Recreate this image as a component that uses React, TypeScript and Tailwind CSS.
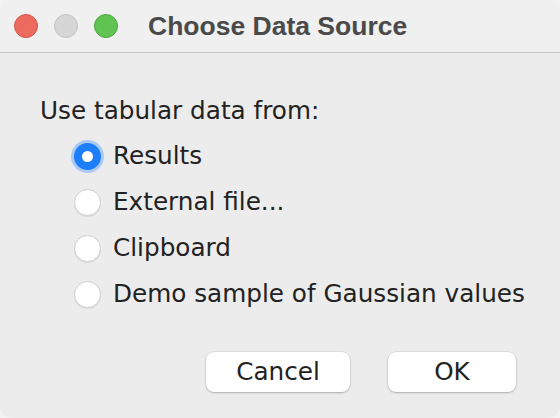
import { useState } from "react";

const options = [
  "Results",
  "External file...",
  "Clipboard",
  "Demo sample of Gaussian values",
];

function Radio(props: { checked: boolean }) {
  if (props.checked) {
    return (
      <div className="w-[27px] h-[27px] rounded-full bg-[#1c7ef9] flex items-center justify-center shadow-[0_0_0_3px_rgba(90,160,255,0.45)]">
        <div className="w-[11px] h-[11px] rounded-full bg-white" />
      </div>
    );
  }
  return (
    <div className="w-[27px] h-[27px] rounded-full bg-white border border-[#cfcfcf] shadow-[0_1px_1px_rgba(0,0,0,0.08)]" />
  );
}

export default function App() {
  const [selected, setSelected] = useState(0);

  return (
    <div className="w-[560px] h-[418px] bg-[#f3f3f3]">
      <div className="w-full h-full rounded-[12px] overflow-hidden bg-[#ececec] flex flex-col font-['DejaVu_Sans',sans-serif] text-[#222]">
        {/* title bar */}
        <div className="h-[53px] shrink-0 bg-[#eff0ef] border-b border-[#c2c2c2] flex items-center pl-[14px]">
          <div className="flex gap-[16px]">
            <div className="w-[24px] h-[24px] rounded-full bg-[#ec6a5e] border border-[#d5564a]" />
            <div className="w-[24px] h-[24px] rounded-full bg-[#d6d6d6] border border-[#c2c2c2]" />
            <div className="w-[24px] h-[24px] rounded-full bg-[#60c453] border border-[#4ea640]" />
          </div>
          <div className="ml-[30px] font-['Liberation_Sans',sans-serif] font-bold text-[26.5px] text-[#4a4a4a] leading-none">
            Choose Data Source
          </div>
        </div>

        <div className="pt-[43px] pl-[40px] text-[24.7px] leading-[30px]">
          Use tabular data from:
        </div>

        <div className="mt-[7px] flex flex-col pl-[74px]">
          {options.map((opt, i) => (
            <div
              key={opt}
              className="h-[46px] flex items-center cursor-default"
              onClick={() => setSelected(i)}
            >
              <Radio checked={selected === i} />
              <span className="ml-[12px] text-[24.7px] leading-[30px]">{opt}</span>
            </div>
          ))}
        </div>

        <div className="mt-[35px] flex justify-end gap-[38px] pr-[44px]">
          <button className="w-[144px] h-[40px] rounded-[8px] bg-white text-[24.7px] text-[#222] shadow-[0_0_0_0.5px_rgba(0,0,0,0.12),0_1px_2px_rgba(0,0,0,0.22)]">
            Cancel
          </button>
          <button className="w-[128px] h-[40px] rounded-[8px] bg-white text-[24.7px] text-[#222] shadow-[0_0_0_0.5px_rgba(0,0,0,0.12),0_1px_2px_rgba(0,0,0,0.22)]">
            OK
          </button>
        </div>
      </div>
    </div>
  );
}
